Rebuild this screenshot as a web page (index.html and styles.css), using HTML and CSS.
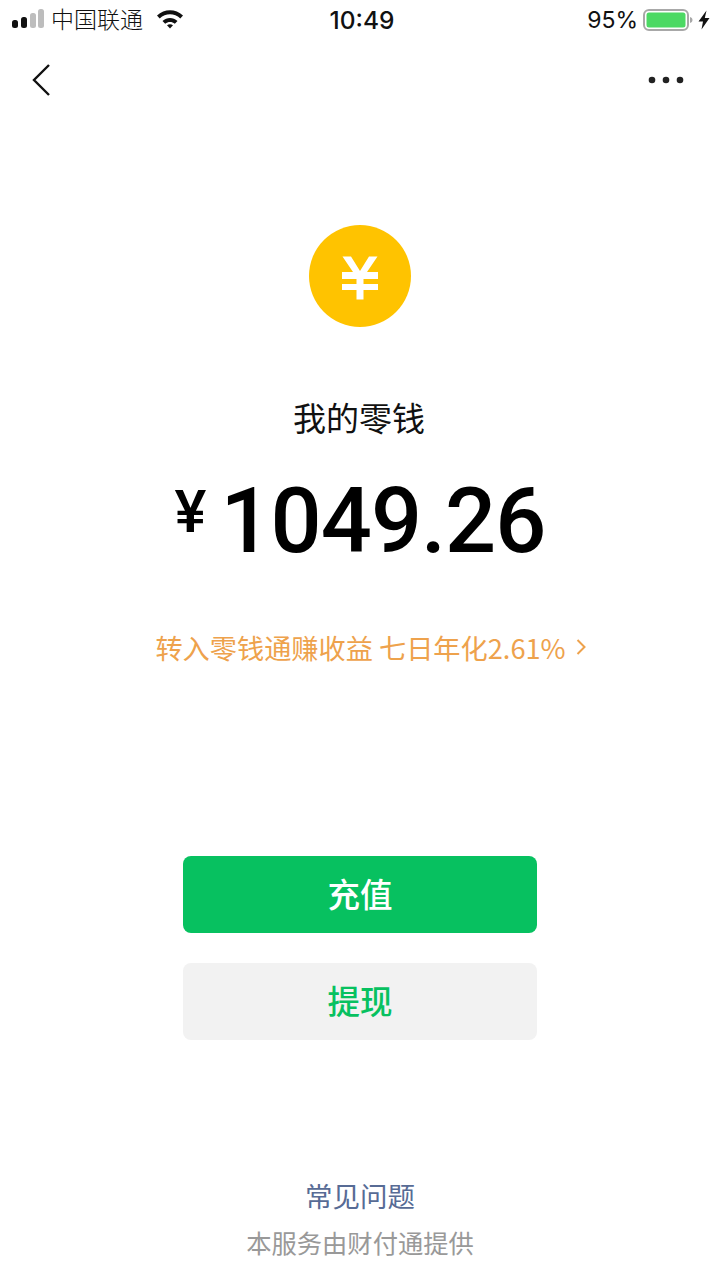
FILE: index.html
```html
<!DOCTYPE html>
<html lang="zh-CN">
<head>
<meta charset="utf-8">
<title>我的零钱</title>
<link rel="stylesheet" href="styles.css">
</head>
<body>
<div class="page">
  <header class="status">
    <div class="status-left">
      <svg class="signal" width="32" height="20" viewBox="0 0 32 20"><rect x="0" y="11" width="6" height="8" rx="2.5" fill="#111"/><rect x="9" y="8" width="6" height="11" rx="2.5" fill="#111"/><rect x="18" y="4" width="6" height="15" rx="2.5" fill="#bdbdbd"/><rect x="26" y="0" width="6" height="19" rx="2.5" fill="#bdbdbd"/></svg>
      <span class="carrier">中国联通</span>
      <svg class="wifi" width="28" height="20" viewBox="0 0 28 20"><path d="M1 6.5C8.5-.5 19.500-.5 27 6.500L24.300 9.400C18.300 3.800 9.700 3.800 3.700 9.400Z" fill="#111"/><path d="M6.500 12C10.800 8 17.200 8 21.500 12L18.800 14.800C16 12.300 12 12.300 9.200 14.800Z" fill="#111"/><path d="M11 16.300C12.800 14.900 15.200 14.900 17 16.300L14 19.500Z" fill="#111"/></svg>
    </div>
    <div class="clock">10:49</div>
    <div class="status-right">
      <span class="pct">95%</span>
      <svg class="battery" width="50" height="24" viewBox="0 0 50 24"><rect x="1" y="2" width="44" height="20" rx="5" fill="none" stroke="#a8a8a8" stroke-width="2"/><rect x="3.500" y="4.500" width="39" height="15" rx="2.500" fill="#4cd964"/><path d="M47 9c1.500.3 2.500 1.500 2.500 3s-1 2.700-2.500 3Z" fill="#a8a8a8"/></svg>
      <svg class="bolt" width="12" height="20" viewBox="0 0 12 20"><path d="M8.500 0.500L0.500 11.500H5L3.500 19.500L11.500 8H6.800Z" fill="#111"/></svg>
    </div>
  </header>
  <nav class="nav">
    <svg width="20" height="34" viewBox="0 0 20 34"><path d="M18 2L3 17L18 32" fill="none" stroke="#111" stroke-width="2.400"/></svg>
    <svg width="36" height="8" viewBox="0 0 36 8"><circle cx="4" cy="4" r="3.300" fill="#222"/><circle cx="18" cy="4" r="3.300" fill="#222"/><circle cx="32" cy="4" r="3.300" fill="#222"/></svg>
  </nav>
  <main class="main">
    <svg class="coin" width="102" height="102" viewBox="0 0 102 102"><circle cx="51" cy="51" r="51" fill="#ffc300"/><path d="M33.500 31.500H42L51 46L60 31.500H68.500L58 47H69V54H54.500V59H69V65H54.500V74.500H47.500V65H33V59H47.500V54H33V47H44Z" fill="#fff"/></svg>
    <h1 class="title">我的零钱</h1>
    <div class="amount"><span class="yen">¥</span><span class="num">1049.26</span></div>
    <a class="promo">转入零钱通赚收益 七日年化2.61%<svg class="chev" width="10" height="18" viewBox="0 0 10 18"><path d="M1.500 2L8.500 9L1.500 16" fill="none" stroke="#eea24c" stroke-width="2"/></svg></a>
    <div class="btn btn-primary">充值</div>
    <div class="btn btn-secondary">提现</div>
  </main>
  <footer class="footer">
    <div class="faq">常见问题</div>
    <div class="provider">本服务由财付通提供</div>
  </footer>
</div>
</body>
</html>
```

FILE: styles.css
```css
* { box-sizing: border-box; }
html, body { margin: 0; padding: 0; background: #fff; }
body { font-family: "Noto Sans CJK SC", "Liberation Sans", sans-serif; }
.page { width: 720px; height: 1280px; display: flex; flex-direction: column; overflow: hidden; }

.status { height: 40px; padding: 0 10px 0 12px; display: flex; align-items: center; justify-content: space-between; color: #111; }
.status-left { width: 260px; display: flex; align-items: center; }
.signal { margin-top: -2px; }
.carrier { font-size: 23px; line-height: 36px; margin: -4px 0 0 7px; font-weight: 300; }
.wifi { margin-left: 13px; margin-top: -2px; }
.clock { font-family: "Inter", "Liberation Sans", sans-serif; font-size: 24.500px; font-weight: 500; margin-left: 2px; }
.status-right { width: 260px; display: flex; align-items: center; justify-content: flex-end; }
.pct { font-family: "Inter", "Liberation Sans", sans-serif; font-size: 23px; margin-right: 5px; }
.battery { display: block; }
.bolt { display: block; margin-left: 5px; }

.nav { height: 84px; padding: 0 36px 4px 31px; display: flex; align-items: center; justify-content: space-between; }

.main { display: flex; flex-direction: column; align-items: center; padding-top: 101px; }
.coin { display: block; }
.title { margin: 67px 2px 0 0; font-size: 33px; line-height: 46px; font-weight: 400; color: #111; }
.amount { margin-top: 31px; height: 102px; display: flex; align-items: flex-start; color: #000; }
.yen { font-family: "Roboto", sans-serif; font-size: 60px; line-height: 82px; font-weight: 500; margin-right: 14px; }
.num { font-family: "Roboto", sans-serif; font-size: 90px; line-height: 102px; font-weight: 500; letter-spacing: -1px; }
.promo { margin: 54px 0 0 21px; display: flex; align-items: center; font-size: 27.200px; line-height: 40px; color: #eea24c; }
.chev { margin-left: 10px; }

.btn { width: 354px; height: 77px; border-radius: 8px; padding-bottom: 5px; display: flex; align-items: center; justify-content: center; font-size: 32.500px; font-weight: 500; }
.btn-primary { margin-top: 189px; background: #07c160; color: #fff; }
.btn-secondary { margin-top: 30px; background: #f2f2f2; color: #07c160; }

.footer { margin-top: auto; padding-bottom: 20px; display: flex; flex-direction: column; align-items: center; }
.faq { font-size: 27.500px; line-height: 40px; margin-top: -2px; color: #576b95; }
.provider { margin-top: 9px; font-size: 25.300px; line-height: 36px; color: #999; }
```
